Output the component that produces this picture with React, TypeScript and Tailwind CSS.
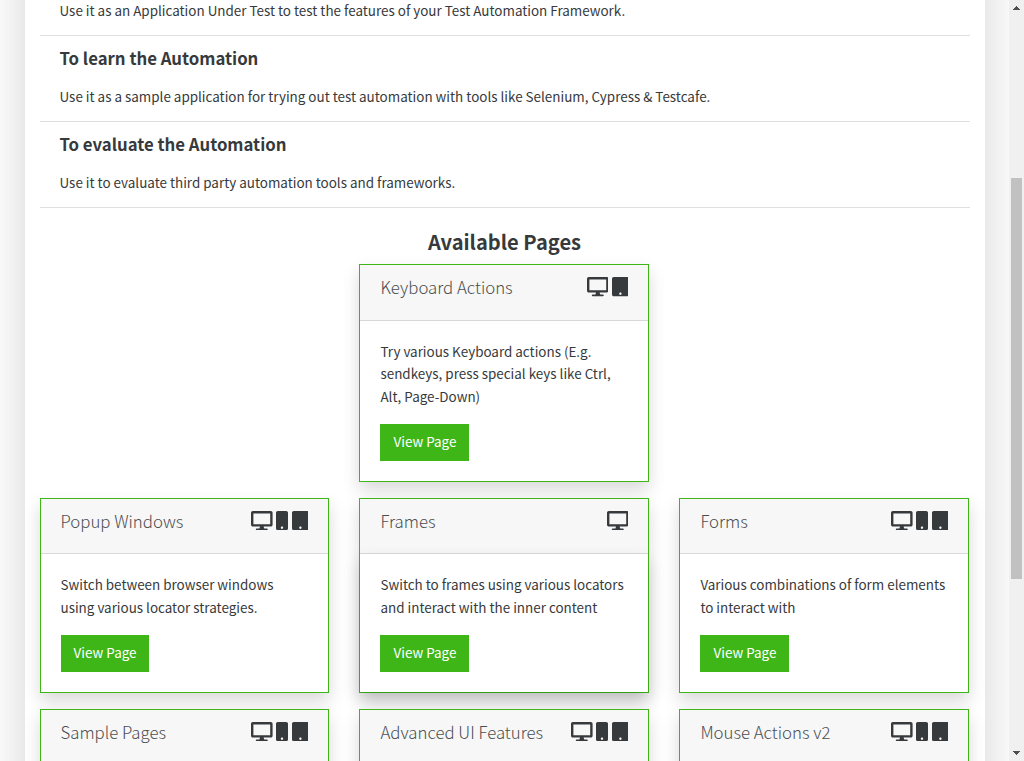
import { FaDesktop, FaMobile, FaTablet } from "react-icons/fa";

type Device = "desktop" | "mobile" | "tablet";

interface PageCard {
  title: string;
  text?: string;
  devices: Device[];
  raised?: boolean;
}

const reasons = [
  { title: "", text: "Use it as an Application Under Test to test the features of your Test Automation Framework." },
  { title: "To learn the Automation", text: "Use it as a sample application for trying out test automation with tools like Selenium, Cypress & Testcafe." },
  { title: "To evaluate the Automation", text: "Use it to evaluate third party automation tools and frameworks." },
];

const all: Device[] = ["desktop", "mobile", "tablet"];

const keyboard: PageCard = {
  title: "Keyboard Actions",
  text: "Try various Keyboard actions (E.g. sendkeys, press special keys like Ctrl, Alt, Page-Down)",
  devices: ["desktop", "tablet"],
};

const pages: PageCard[] = [
  { title: "Popup Windows", text: "Switch between browser windows using various locator strategies.", devices: all },
  { title: "Frames", text: "Switch to frames using various locators and interact with the inner content", devices: ["desktop"], raised: true },
  { title: "Forms", text: "Various combinations of form elements to interact with", devices: all },
  { title: "Sample Pages", devices: all },
  { title: "Advanced UI Features", devices: all },
  { title: "Mouse Actions v2", devices: all },
];

const icons = {
  desktop: { Icon: FaDesktop, size: "h-[19.2px] w-[21.6px]" },
  mobile: { Icon: FaMobile, size: "h-[19.2px] w-[12px]" },
  tablet: { Icon: FaTablet, size: "h-[19.2px] w-[16.8px]" },
};

function Card({ title, text, devices, raised }: PageCard) {
  return (
    <section className="border border-[#3fb618] bg-white shadow-[0_8px_16px_rgba(0,0,0,0.15)]">
      <header className="flex h-[55.4px] justify-between border-b border-[#d8d8d8] bg-[#f7f7f7] px-5">
        <h4 className="pt-[11px] text-[16.8px] leading-[22.5px] font-light whitespace-nowrap text-[#4b4e50]">{title}</h4>
        <div className="flex gap-[3.3px] pt-[12px]">
          {devices.map((device) => {
            const { Icon, size } = icons[device];
            return <Icon key={device} className={size} />;
          })}
        </div>
      </header>
      {text ? (
        <div className={raised ? "flow-root p-5 shadow-[0_8px_16px_rgba(0,0,0,0.15)]" : "flow-root p-5"}>
          <p className="-mt-[0.95px] mb-[16.95px] leading-[22.5px]">{text}</p>
          <button className="block h-[36.6px] bg-[#3fb618] pr-[12.6px] pb-[3.2px] pl-[13.1px] leading-[22.5px] text-white">View Page</button>
        </div>
      ) : (
        <div className="h-[138px]" />
      )}
    </section>
  );
}

export default function App() {
  return (
    <div className="flex h-[761px] overflow-hidden bg-white font-['Noto_Sans_CJK_SC','Noto_Sans',sans-serif] text-[13.43px] text-[#373a3c]">
      <div className="h-full w-[1009px] shrink-0 overflow-hidden">
        <main className="mx-auto -mt-[151px] h-[1200px] w-[960px] bg-white px-[15px] pt-[101px] shadow-[0_16px_48px_rgba(0,0,0,0.175)]">
          {reasons.map(({ title, text }) => (
            <article key={text} className="h-[86px] border-b border-[#dfdfdf] px-5 pt-[11px]">
              <h5 className="mb-[15px] h-[22.5px] text-[16.76px] leading-[22.5px] font-bold">{title}</h5>
              <p className="leading-[22.5px]">{text}</p>
            </article>
          ))}
          <h3 className="mt-[19px] mb-[7.4px] text-center text-[20.1px] leading-[30px] font-bold">Available Pages</h3>
          <div className="grid grid-cols-[289.97px_289.97px_289.97px] gap-x-[29.98px] gap-y-4">
            <div className="col-span-3 grid grid-cols-subgrid">
              <div className="col-start-2">
                <Card {...keyboard} />
              </div>
            </div>
            {pages.map((page) => (
              <Card key={page.title} {...page} />
            ))}
          </div>
        </main>
      </div>
      <aside className="flex w-[15px] flex-col items-center bg-[#f0f0f0]">
        <svg className="mt-[5px] h-[6px] w-[9px]" viewBox="0 0 9 6" shapeRendering="crispEdges">
          <path d="M4 1h1v1h1v1h1v1h1v1H1V4h1V3h1V2h1Z" fill="#505050" />
        </svg>
        <div className="mt-[167px] h-[401px] w-[11px] bg-[#c1c1c1]" />
        <svg className="mt-auto mb-[5px] h-[6px] w-[9px]" viewBox="0 0 9 6" shapeRendering="crispEdges">
          <path d="M1 1h7v1H7v1H6v1H5v1H4V4H3V3H2V2H1Z" fill="#505050" />
        </svg>
      </aside>
    </div>
  );
}
